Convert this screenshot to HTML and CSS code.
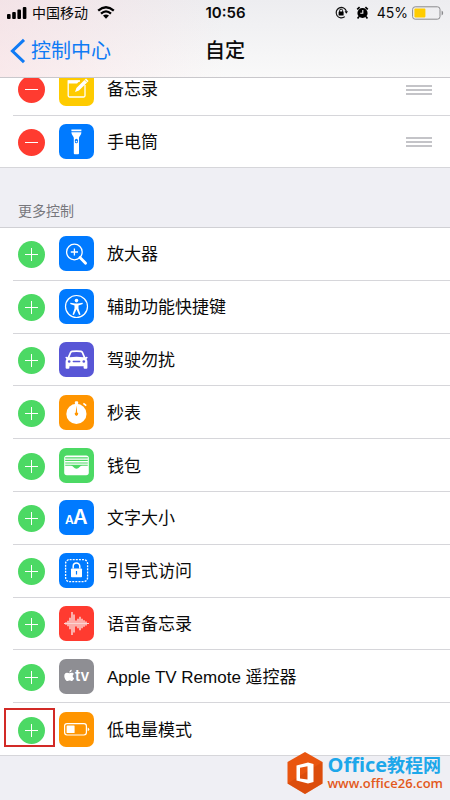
FILE: index.html
```html
<!DOCTYPE html>
<html lang="zh-CN">
<head>
<meta charset="utf-8">
<meta name="viewport" content="width=device-width, initial-scale=1">
<title>自定</title>
<link rel="stylesheet" href="styles.css">
</head>
<body>
<header class="top">
  <div class="status">
    <div class="status-left">
      <svg class="signal" width="20" height="12" viewBox="0 0 20 12" aria-hidden="true"><rect x="0" y="7" width="3.6" height="5" rx="1"/><rect x="5.2" y="5" width="3.6" height="7" rx="1"/><rect x="10.4" y="2.6" width="3.6" height="9.4" rx="1"/><rect x="15.8" y="0" width="3.6" height="12" rx="1"/></svg>
      <span class="carrier">中国移动</span>
      <svg class="wifi" width="18" height="13" viewBox="0 0 18 13" aria-hidden="true"><path d="M1.2 4.6Q9-2.2 16.8 4.6M4 7.6Q9 3.2 14 7.6" fill="none" stroke="#000" stroke-width="2.3"/><path d="M6 9.6Q9 7.2 12 9.6L9 12.8z"/></svg>
    </div>
    <span class="clock">10:56</span>
    <div class="status-right">
      <svg width="13" height="13" viewBox="0 0 13 13" aria-hidden="true"><path d="M9.8 10.6A5.2 5.2 0 1 1 11.4 5.4" fill="none" stroke="#111" stroke-width="1.2"/><path d="M9.6 5.2h3.4l-1.7 2.6z"/><rect x="3.6" y="5.6" width="5" height="3.8" rx=".5"/><path d="M4.6 6V4.6a1.5 1.5 0 0 1 3 0V6" fill="none" stroke="#111"/></svg>
      <svg class="alarm" width="13" height="13" viewBox="0 0 13 13" aria-hidden="true"><circle cx="6.5" cy="7" r="5.1"/><path d="M1.2 3.4L3.6 1.2M11.8 3.4L9.4 1.2M3 10.6l-1.4 1.8M10 10.6l1.4 1.8" stroke="#000" stroke-width="1.7"/><path d="M6.8 3.9v3.4H4.3" fill="none" stroke="#f1f0f2" stroke-width="1.1"/></svg>
      <span class="percent">45%</span>
      <svg class="battery" width="32" height="14" viewBox="0 0 32 14" aria-hidden="true"><rect x=".6" y=".8" width="27.4" height="12.4" rx="2.6" fill="none" stroke="#8b8b8e"/><rect x="2.4" y="2.6" width="11" height="8.8" rx=".8" fill="#fc0"/><path d="M29.6 4.6q1.6.7 1.6 2.4t-1.6 2.4z" fill="#8b8b8e"/></svg>
    </div>
  </div>
  <nav class="navbar">
    <a class="back" href="#"><svg width="16" height="26" viewBox="0 0 16 26" aria-hidden="true"><path d="M14 1.8L2.4 13 14 24.2" fill="none" stroke="#0f7bf5" stroke-width="3"/></svg><span>控制中心</span></a>
    <h1>自定</h1>
  </nav>
</header>

<main>
  <ul class="list included">
    <li class="row">
      <button class="toggle remove" aria-label="移除备忘录"></button>
      <svg class="icon yellow" viewBox="0 0 35 35" aria-hidden="true"><path d="M21 10H9.2v14.6a1.4 1.4 0 0 0 1.4 1.4h14a1.4 1.4 0 0 0 1.4-1.4V14" fill="none" stroke="#fff" stroke-width="1.3"/><path d="M9 9.5h12l-3 3H9zM16 21l1.4-4L27 7.4l2.6 2.6L20 19.6z" fill="#fff"/><path d="M25.5 8.8l2.7 2.7" stroke="#fecb00" stroke-width=".7"/></svg>
      <span class="label">备忘录</span>
      <button class="grip" aria-label="移动备忘录"></button>
    </li>
    <li class="row">
      <button class="toggle remove" aria-label="移除手电筒"></button>
      <svg class="icon blue" viewBox="0 0 35 35" aria-hidden="true"><path d="M12.4 5.4h10v1.8h-10zM12.4 8.2h10c0 2.6-2 3.6-2.4 5.6v15.5a.9.9 0 0 1-.9.9h-3.4a.9.9 0 0 1-.9-.9V13.8c-.4-2-2.4-3-2.4-5.6z" fill="#fff"/><rect x="15.9" y="14.8" width="3" height="4.4" rx="1.5" fill="#007aff"/><circle cx="17.4" cy="17.6" r=".8" fill="#fff"/></svg>
      <span class="label">手电筒</span>
      <button class="grip" aria-label="移动手电筒"></button>
    </li>
  </ul>

  <h2 class="section">更多控制</h2>

  <ul class="list more">
    <li class="row">
      <button class="toggle add" aria-label="添加放大器"></button>
      <svg class="icon blue" viewBox="0 0 35 35" aria-hidden="true"><circle cx="15.4" cy="16" r="7.8" fill="none" stroke="#fff" stroke-width="1.3"/><path d="M15.4 12.4v7.2M11.8 16H19" stroke="#fff" stroke-width="1.3"/><path d="M21 21.5l5.6 5.8" stroke="#fff" stroke-width="2.8" stroke-linecap="round"/></svg>
      <span class="label">放大器</span>
    </li>
    <li class="row">
      <button class="toggle add" aria-label="添加辅助功能快捷键"></button>
      <svg class="icon blue" viewBox="0 0 35 35" aria-hidden="true"><circle cx="17.5" cy="17.5" r="11" fill="none" stroke="#fff" stroke-width="1.2"/><circle cx="17.5" cy="11.6" r="1.8" fill="#fff"/><path d="M11.4 13.8l4.6.8h3l4.6-.8.2 1.3-4.3 1.3v3l2 6-1.4.5-2.6-5.7-2.6 5.7-1.4-.5 2-6v-3l-4.3-1.3z" fill="#fff"/></svg>
      <span class="label">辅助功能快捷键</span>
    </li>
    <li class="row">
      <button class="toggle add" aria-label="添加驾驶勿扰"></button>
      <svg class="icon purple" viewBox="0 0 35 35" aria-hidden="true"><path fill-rule="evenodd" d="M8.6 15.2L10.9 10q.6-1.3 2-1.4 4.6-.5 9.2 0 1.4.1 2 1.4l2.3 5.2 1.2-.4q1.3 0 1 1l-1.1 1.1q.9 1.2.9 2.6v6.3q0 1-1 1h-1.8q-1 0-1-1v-1.6H10.4v1.6q0 1-1 1H7.6q-1 0-1-1v-6.3q0-1.4.9-2.6l-1.1-1.1q-.3-1 1-1zM10.5 15.3q7-1.1 14 0l-1.8-4.3q-.3-.7-1-.8-4.2-.4-8.4 0-.7.1-1 .8z" fill="#fff"/><circle cx="10.2" cy="19.5" r="1.3" fill="#5856d6"/><circle cx="24.8" cy="19.5" r="1.3" fill="#5856d6"/><rect x="13.6" y="18.8" width="7.8" height="1.5" rx=".7" fill="#5856d6"/></svg>
      <span class="label">驾驶勿扰</span>
    </li>
    <li class="row">
      <button class="toggle add" aria-label="添加秒表"></button>
      <svg class="icon orange" viewBox="0 0 35 35" aria-hidden="true"><circle cx="17.4" cy="18.9" r="10.1" fill="#fff"/><rect x="15.9" y="6.3" width="3.2" height="4" rx="1" fill="#fff"/><path d="M24.4 8.3l2.8 2.4" stroke="#fff" stroke-width="1.6"/><path d="M17.5 10.4l.7 7.1a1.7 1.7 0 1 1-1.5 0z" fill="#ff9500"/></svg>
      <span class="label">秒表</span>
    </li>
    <li class="row">
      <button class="toggle add" aria-label="添加钱包"></button>
      <svg class="icon green" viewBox="0 0 35 35" aria-hidden="true"><rect x="5.2" y="7.6" width="24.6" height="19.6" rx="2.6" fill="#fff"/><path d="M6.2 9.8h22.6M6.2 12.4h22.6M6.2 15h22.6" stroke="#4cd964" stroke-width="1.2"/><path d="M6.2 16.8h22.6v1h-5.6q-1.6 0-2.6 1.3-1.3 1.7-3.1 1.7t-3.1-1.7q-1-1.3-2.6-1.300H6.2z" fill="#4cd964"/></svg>
      <span class="label">钱包</span>
    </li>
    <li class="row">
      <button class="toggle add" aria-label="添加文字大小"></button>
      <svg class="icon blue glyphs" viewBox="0 0 35 35" aria-hidden="true"><text x="6" y="24" font-size="12">A</text><text x="14" y="24" font-size="20">A</text></svg>
      <span class="label">文字大小</span>
    </li>
    <li class="row">
      <button class="toggle add" aria-label="添加引导式访问"></button>
      <svg class="icon blue" viewBox="0 0 35 35" aria-hidden="true"><rect x="6.6" y="6.6" width="22" height="22" rx="4" fill="none" stroke="#fff" stroke-width="1.3" stroke-dasharray="2 1.1"/><rect x="12" y="15.4" width="11" height="8.8" rx=".8" fill="#fff"/><path d="M14.2 15.6v-2.3a3.3 3.3 0 0 1 6.6 0v2.3" fill="none" stroke="#fff" stroke-width="1.5"/><path d="M17.5 18v3.4" stroke="#007aff" stroke-width="1.2"/></svg>
      <span class="label">引导式访问</span>
    </li>
    <li class="row">
      <button class="toggle add" aria-label="添加语音备忘录"></button>
      <svg class="icon red" viewBox="0 0 35 35" aria-hidden="true"><path d="M5 17.5h25" stroke="#fbd5d2" stroke-width="1"/><path d="M7 16.3v2.4M9 14.8v5.4M11 11.8v11.4M13 6v23M15 8.6v17.8M17 14.4v6.2M19 12.8v9.4M21 10.8v13.4M23 12.8v9.4M25 14.2v6.6M27 15.6v3.8" stroke="#fbd5d2" stroke-width="1.5"/></svg>
      <span class="label">语音备忘录</span>
    </li>
    <li class="row">
      <button class="toggle add" aria-label="添加 Apple TV Remote 遥控器"></button>
      <svg class="icon gray glyphs" viewBox="0 0 35 35" aria-hidden="true"><path d="M10.4 14.3c.9 0 1.5-.6 2.5-.5.8 0 1.6.4 2 1.1-1.8 1.1-1.5 3.5.3 4.2-.4 1.2-1.4 3-2.5 3-.8 0-1.1-.5-2.1-.5s-1.3.5-2.1.5c-1.6 0-3.2-3.1-3.2-5.2 0-1.9 1.2-3.1 2.7-3.1.9 0 1.6.5 2.4.5zM10.3 13.6c-.1-1.4 1-2.7 2.4-2.9.2 1.5-1 2.8-2.4 2.9z" fill="#fff"/><text x="16" y="22" font-size="15">tv</text></svg>
      <span class="label">Apple TV Remote 遥控器</span>
    </li>
    <li class="row marked">
      <button class="toggle add" aria-label="添加低电量模式"></button>
      <svg class="icon orange" viewBox="0 0 35 35" aria-hidden="true"><rect x="5.6" y="11.6" width="21.8" height="11.4" rx="2.4" fill="none" stroke="#fff" stroke-width="1.2"/><rect x="7.6" y="13.5" width="8" height="7.6" rx=".6" fill="#fff"/><path d="M28.7 15.4q1.5.5 1.5 1.9t-1.5 1.9z" fill="#fff"/></svg>
      <span class="label">低电量模式</span>
    </li>
  </ul>
</main>

<aside class="brand">
  <svg width="36" height="42" viewBox="0 0 36 42" aria-hidden="true"><path d="M18 0l17.5 10v21.5L18 42 .5 31.5V10z" fill="#e9550f"/><path d="M.5 31.5L35.5 10v21.5L18 42z" fill="#cf450a" opacity=".5"/><path fill-rule="evenodd" d="M9.5 13.5L21 10.5l5.5 1.5v18L21 31.5 9.5 28.5zM13 15.8v10.6l7.5 1.2V14.2z" fill="#fff"/></svg>
  <div class="brand-text">
    <strong>Office<span class="brand-cjk">教程网</span></strong>
    <span>www.office26.com</span>
  </div>
</aside>
</body>
</html>
```
FILE: styles.css
```css
*,
*::before {
  box-sizing: border-box;
}

body {
  margin: 0;
  min-height: 100vh;
  position: relative;
  background: #efeff4;
  color: #0a0a0a;
  font-family: Inter, "Noto Sans CJK SC", sans-serif;
  font-size: 17px;
}

h1,
h2,
ul {
  margin: 0;
  padding: 0;
}

button {
  padding: 0;
  border: 0;
}

.top {
  position: relative;
  z-index: 1;
  height: 78px;
  border-bottom: 1px solid #c9c8cc;
  background:
    linear-gradient(90deg, rgba(250, 218, 222, 0.5), rgba(250, 225, 228, 0) 50%),
    linear-gradient(#ededf0, #f9f9f9);
}

.status,
.navbar {
  display: grid;
  grid-template-columns: 1fr auto 1fr;
  align-items: center;
}

.status {
  height: 25px;
  padding: 0 6px 0 7px;
  font-size: 14px;
  line-height: 20px;
}

.status-left,
.status-right {
  display: flex;
  align-items: center;
}

.carrier {
  margin: 0 9px 0 5px;
}

.clock {
  font-size: 15px;
  font-weight: 600;
}

.status-right {
  justify-content: flex-end;
}

.alarm {
  margin: 0 8px;
}

.percent {
  margin-right: 4px;
}

.navbar {
  height: 52px;
  padding: 0 10px;
  font-size: 20px;
  line-height: 30px;
}

.back {
  display: flex;
  align-items: center;
  gap: 5px;
  color: #0f7bf5;
  text-decoration: none;
}

h1 {
  font-size: 20px;
  font-weight: 500;
}

.list {
  display: grid;
  grid-auto-rows: 1fr;
  list-style: none;
  background: #fff;
}

/* The first row is scrolled partly under the header. */
.included {
  height: 105px;
  margin-top: -15px;
}

.more {
  height: 528px;
}

.row {
  position: relative;
  display: flex;
  align-items: center;
  margin-left: 13px;
  padding: 0 18px 0 5px;
  border-bottom: 1px solid #d6d6da;
}

.row:last-child {
  margin-left: 0;
  padding-left: 18px;
}

.toggle {
  flex: none;
  width: 27px;
  height: 27px;
  margin: 2px 14px 0 0;
  border-radius: 50%;
}

.add {
  background:
    linear-gradient(#fff, #fff) center / 13px 1px no-repeat,
    linear-gradient(#fff, #fff) center / 1px 13px no-repeat,
    #4cd964;
}

.remove {
  background: linear-gradient(#fff, #fff) center / 13px 1px no-repeat, #ff3b30;
}

.icon {
  flex: none;
  width: 35px;
  height: 35px;
  margin-right: 13px;
  border-radius: 7px;
}

.yellow { background: #fecb00; }
.blue { background: #007aff; }
.purple { background: #5856d6; }
.orange { background: #ff9500; }
.green { background: #4cd964; }
.red { background: #ff3b30; }
.gray { background: #8e8e93; }

.glyphs {
  fill: #fff;
  font-family: Inter, sans-serif;
  font-weight: 600;
}

.label {
  flex: 1;
  padding-top: 3px;
  font-family: "Liberation Sans", "Noto Sans CJK SC", sans-serif;
  line-height: 24px;
}

.grip {
  width: 26px;
  height: 10px;
  margin-top: 2px;
  background: repeating-linear-gradient(#c4c4c8 0 2px, transparent 2px 4px);
}

.section {
  display: flex;
  align-items: flex-end;
  height: 60px;
  padding: 0 18px 6px;
  border-bottom: 1px solid #d0d0d4;
  color: #77777c;
  font-size: 14px;
  font-weight: 400;
  line-height: 20px;
}

.marked::before {
  content: "";
  position: absolute;
  left: 4px;
  top: 5px;
  width: 51px;
  height: 39px;
  border: 2px solid #d22a26;
  pointer-events: none;
}

.brand {
  position: absolute;
  right: 7px;
  bottom: 6px;
  display: flex;
  align-items: center;
  gap: 5px;
  font-family: "Open Sans", "Noto Sans CJK SC", sans-serif;
}

.brand-text {
  display: flex;
  flex-direction: column;
  color: #e3591b;
  font-size: 13px;
  font-weight: 600;
  line-height: 16px;
}

.brand-text strong {
  color: #1da7ea;
  font-size: 20px;
  font-weight: 700;
  line-height: 20px;
}

.brand-cjk {
  font-size: 18px;
}
```
